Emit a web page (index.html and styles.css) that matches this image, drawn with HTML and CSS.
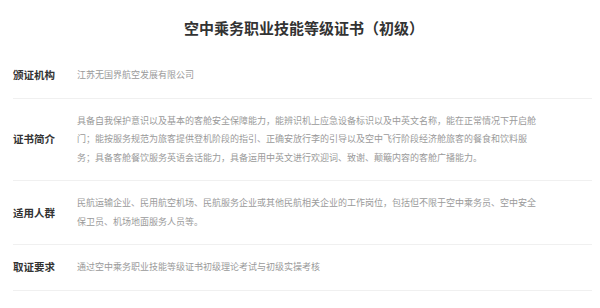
FILE: index.html
```html
<!DOCTYPE html>
<html lang="zh-CN">
<head>
<meta charset="utf-8">
<link rel="stylesheet" href="styles.css">
</head>
<body>
<div class="page">
  <h1 class="title">空中乘务职业技能等级证书（初级）</h1>
  <div class="list">
    <div class="row">
      <div class="label">颁证机构</div>
      <div class="value">江苏无国界航空发展有限公司</div>
    </div>
    <div class="row">
      <div class="label">证书简介</div>
      <div class="value">具备自我保护意识以及基本的客舱安全保障能力，能辨识机上应急设备标识以及中英文名称，能在正常情况下开启舱门；能按服务规范为旅客提供登机阶段的指引、正确安放行李的引导以及空中飞行阶段经济舱旅客的餐食和饮料服务；具备客舱餐饮服务英语会话能力，具备运用中英文进行欢迎词、致谢、颠簸内容的客舱广播能力。</div>
    </div>
    <div class="row">
      <div class="label">适用人群</div>
      <div class="value">民航运输企业、民用航空机场、民航服务企业或其他民航相关企业的工作岗位，包括但不限于空中乘务员、空中安全保卫员、机场地面服务人员等。</div>
    </div>
    <div class="row">
      <div class="label">取证要求</div>
      <div class="value">通过空中乘务职业技能等级证书初级理论考试与初级实操考核</div>
    </div>
  </div>
</div>
</body>
</html>
```

FILE: styles.css
```css
html, body {
  margin: 0;
  padding: 0;
  background: #ffffff;
}

.page {
  width: 579px;
  padding-left: 13px;
  font-family: "Noto Sans CJK SC", "Noto Sans", sans-serif;
}

.title {
  margin: 18px 0 0;
  height: 35px;
  font-size: 15px;
  line-height: 20px;
  font-weight: 700;
  color: #333333;
  text-align: center;
  padding-left: 3px;
}

.list {
  display: flex;
  flex-direction: column;
}

.row {
  display: flex;
  align-items: center;
  padding: 13px 0;
  border-bottom: 1px solid #f0f0f0;
}

.label {
  flex: 0 0 64px;
  font-size: 10.5px;
  line-height: 18px;
  font-weight: 700;
  color: #333333;
}

.value {
  width: 462px;
  font-size: 9px;
  line-height: 18.5px;
  color: #9a9a9a;
}
```
